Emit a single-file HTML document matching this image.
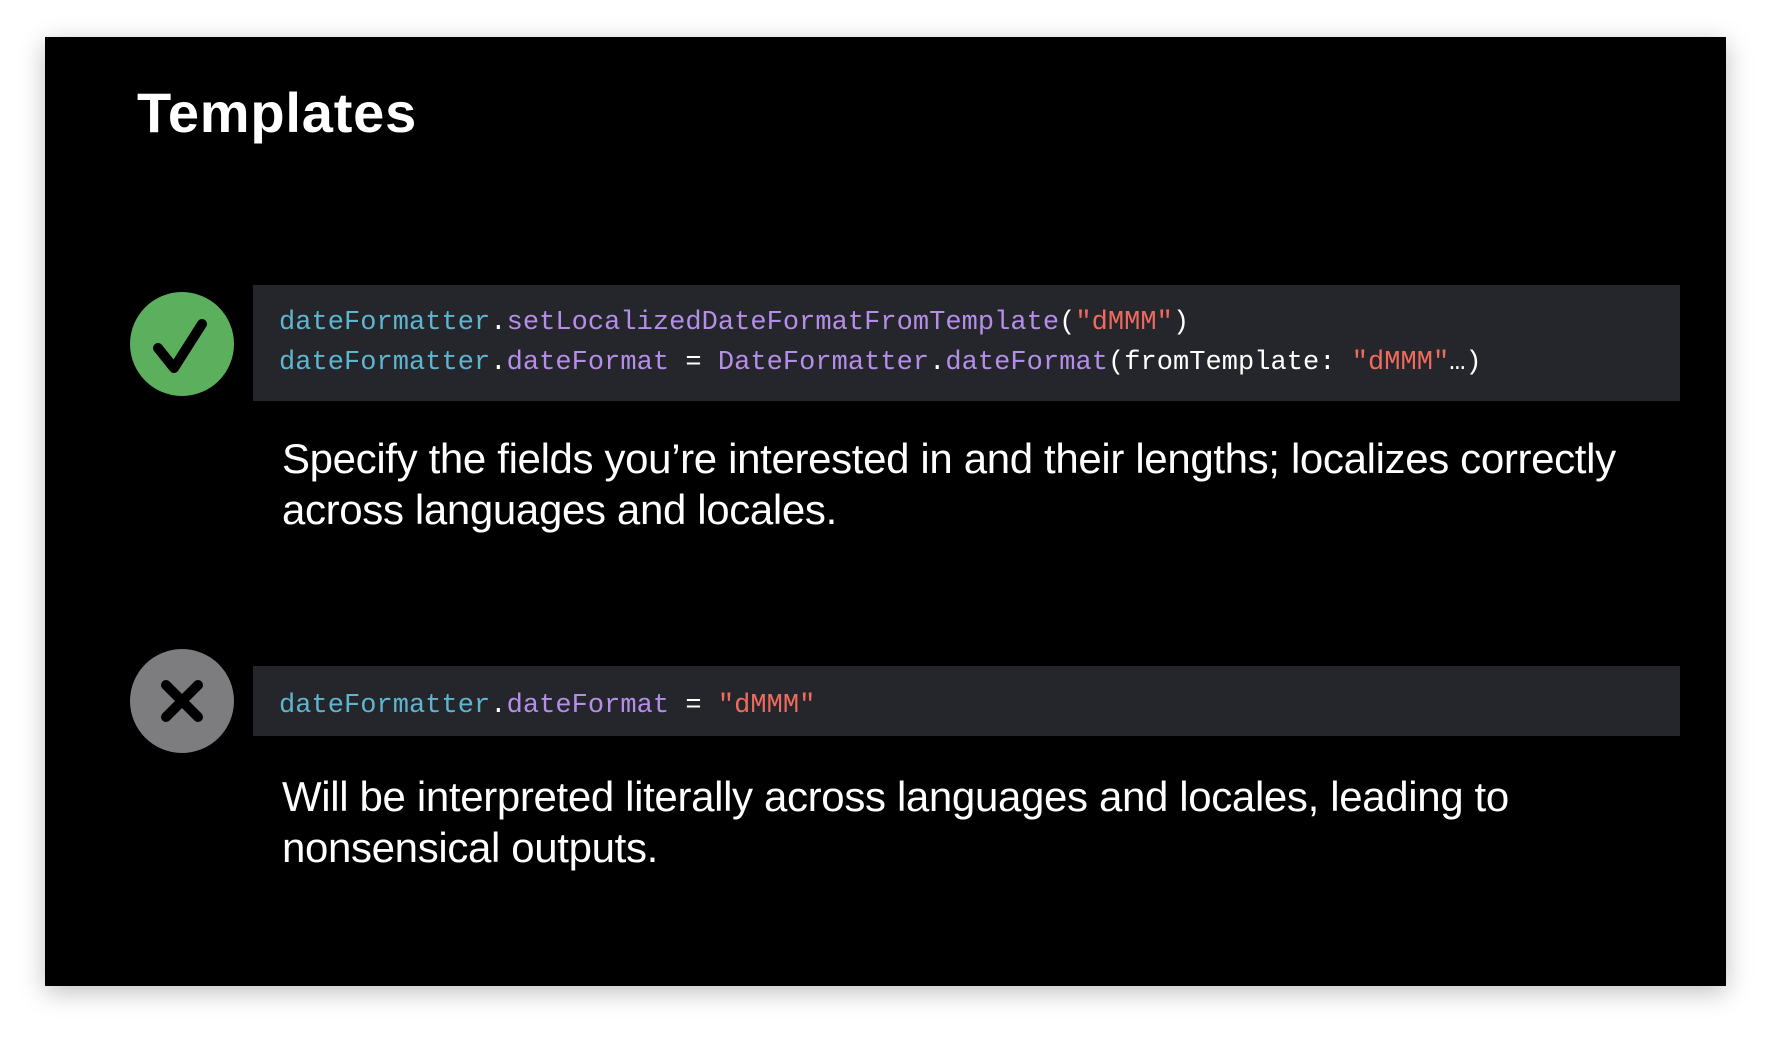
<!DOCTYPE html>
<html><head><meta charset="utf-8"><style>
html,body{margin:0;padding:0;width:1772px;height:1038px;background:#fff;overflow:hidden}
.panel{position:absolute;left:45px;top:37px;width:1681px;height:949px;background:#000;box-shadow:0 6px 24px rgba(0,0,0,.25)}
.t{position:absolute;font-family:"Liberation Sans",sans-serif;color:#fff;white-space:nowrap}
.title{left:137px;top:80px;font-size:56px;font-weight:bold;letter-spacing:0.8px}
.box{position:absolute;left:253px;width:1427px;background:#25262b}
.code{position:absolute;font-family:"Liberation Mono",monospace;font-size:27px;white-space:pre;color:#fff;letter-spacing:0.05px}
.c{color:#5db5cf}.p{color:#b48ee8}.r{color:#ef6b5e}
.body{font-size:42px;line-height:51px;left:282px;letter-spacing:-0.35px}
.circle{position:absolute;left:130px;width:104px;height:104px;border-radius:50%}
</style></head><body>
<div class="panel"></div>
<div class="t title">Templates</div>

<div class="circle" style="top:292px;background:#5caf5c"></div>
<svg style="position:absolute;left:130px;top:292px" width="104" height="104"><path d="M28 56 L44 76 L72 32" stroke="#000" stroke-width="10" fill="none" stroke-linecap="round" stroke-linejoin="round"/></svg>
<div class="box" style="top:285px;height:116px"></div>
<div class="code" style="left:279px;top:308px"><span class="c">dateFormatter</span>.<span class="p">setLocalizedDateFormatFromTemplate</span>(<span class="r">"dMMM"</span>)</div>
<div class="code" style="left:279px;top:348px"><span class="c">dateFormatter</span>.<span class="p">dateFormat</span> = <span class="p">DateFormatter</span>.<span class="p">dateFormat</span>(fromTemplate: <span class="r">"dMMM"</span>…)</div>
<div class="t body" style="top:433px">Specify the fields you’re interested in and their lengths; localizes correctly<br>across languages and locales.</div>

<div class="circle" style="top:649px;background:#7d7d80"></div>
<svg style="position:absolute;left:130px;top:649px" width="104" height="104"><path d="M36 36 L68 68 M68 36 L36 68" stroke="#000" stroke-width="10" fill="none" stroke-linecap="round"/></svg>
<div class="box" style="top:666px;height:70px"></div>
<div class="code" style="left:279px;top:691px"><span class="c">dateFormatter</span>.<span class="p">dateFormat</span> = <span class="r">"dMMM"</span></div>
<div class="t body" style="top:771px">Will be interpreted literally across languages and locales, leading to<br>nonsensical outputs.</div>
</body></html>
